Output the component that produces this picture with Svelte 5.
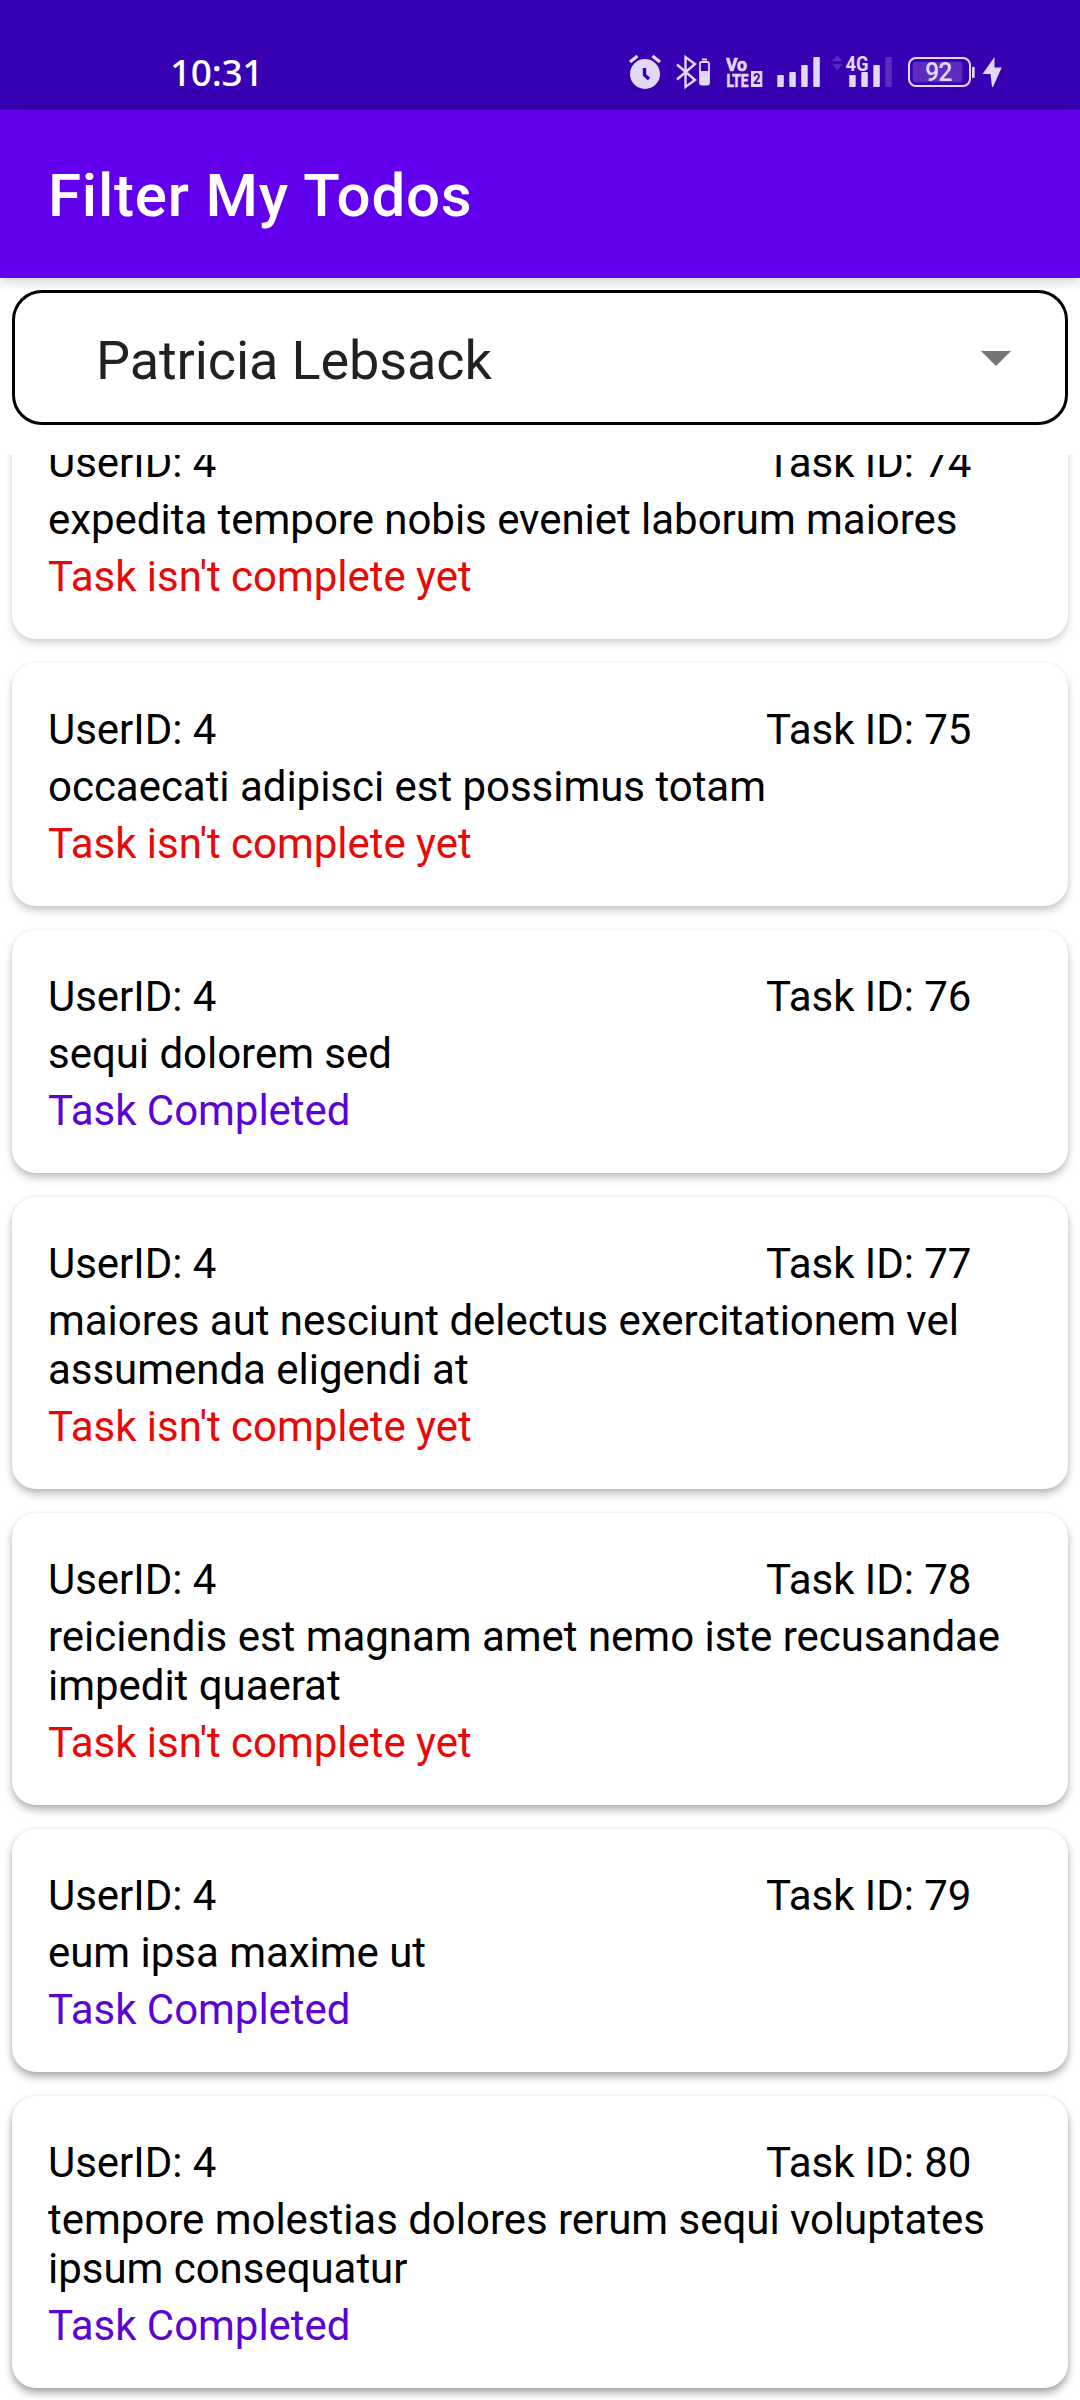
<script>
  const user = 'Patricia Lebsack';

  // `depth` is the shadow strength: cards lower on the screen cast a darker one.
  const todos = [
    { id: 74, title: 'expedita tempore nobis eveniet laborum maiores', done: false, depth: 0.14 },
    { id: 75, title: 'occaecati adipisci est possimus totam', done: false, depth: 0.19 },
    { id: 76, title: 'sequi dolorem sed', done: true, depth: 0.22 },
    { id: 77, title: 'maiores aut nesciunt delectus exercitationem vel assumenda eligendi at', done: false, depth: 0.25 },
    { id: 78, title: 'reiciendis est magnam amet nemo iste recusandae impedit quaerat', done: false, depth: 0.28 },
    { id: 79, title: 'eum ipsa maxime ut', done: true, depth: 0.31 },
    { id: 80, title: 'tempore molestias dolores rerum sequi voluptates ipsum consequatur', done: true, depth: 0.34 }
  ];
</script>

<div class="screen">
  <div class="status">
    <span class="clock">10:31</span>
    <div class="icons">
      <svg class="alarm" width="34" height="40" viewBox="628 52 34 40">
        <circle cx="645" cy="74" r="15" />
        <path class="line" d="M630 62 L637.5 56 M660 62 L652.5 56" stroke-width="3.2" />
        <path class="cut" d="M644.5 68 V75 L649 79" />
      </svg>
      <svg class="bluetooth" width="35" height="40" viewBox="676 52 35 40">
        <path class="line" d="M677 64.500 L695 80 L685.500 87 V57 L695 64 L677 79.500" stroke-width="2.4" />
        <rect x="702" y="58.500" width="5" height="2" />
        <rect class="line" x="700" y="62" width="9" height="22.500" rx="1.500" stroke-width="1.8" />
        <rect x="700" y="71" width="9" height="13.500" />
      </svg>
      <svg class="volte" width="37" height="40" viewBox="726 52 37 40">
        <text class="heavy" x="726" y="70.500" font-size="18.500" textLength="21" lengthAdjust="spacingAndGlyphs">Vo</text>
        <text class="heavy" x="726.500" y="86.500" font-size="19" textLength="22" lengthAdjust="spacingAndGlyphs">LTE</text>
        <rect x="751" y="71" width="11.300" height="16" />
        <text class="dark" x="753" y="84.300" font-size="14.500" textLength="7.500" lengthAdjust="spacingAndGlyphs">2</text>
      </svg>
      <svg class="signal" width="43" height="40" viewBox="777 52 43 40">
        <rect x="777.300" y="75" width="6.500" height="12" rx="1" />
        <rect x="789.300" y="72" width="6.500" height="15" rx="1" />
        <rect x="801.200" y="65" width="6.500" height="22" rx="1" />
        <rect x="813.300" y="57" width="6.500" height="30" rx="1" />
      </svg>
      <svg class="mobile" width="61" height="40" viewBox="832 52 61 40">
        <path class="faint" d="M832 61 L837.200 55.500 L842.500 61 Z M832 64.300 H842.500 L837.200 70 Z" />
        <text x="845.500" y="70.500" font-size="21" textLength="23" lengthAdjust="spacingAndGlyphs">4G</text>
        <rect x="849.200" y="75" width="6.500" height="12" rx="1" />
        <rect x="861.300" y="72" width="6.500" height="15" rx="1" />
        <rect x="873.300" y="65" width="6.500" height="22" rx="1" />
        <rect class="faint" x="885.300" y="57" width="6.500" height="30" rx="1" />
      </svg>
      <svg class="battery" width="67" height="40" viewBox="908 52 67 40">
        <rect class="line" x="909" y="58" width="61" height="28" rx="7" stroke-width="2" />
        <rect class="faint" x="912.700" y="61.700" width="49.600" height="20.600" rx="3" />
        <rect x="972" y="66.700" width="2.700" height="11.300" rx="1" />
        <text class="charge" x="925" y="81.300" font-size="25" textLength="27.500">92</text>
      </svg>
      <svg class="bolt" width="20" height="40" viewBox="982 52 20 40">
        <path d="M994.500 57 L982.500 74 H990.500 L992 87 H993 L1001.700 67.500 H994.500 Z" />
      </svg>
    </div>
  </div>

  <header class="appbar"><h1>Filter My Todos</h1></header>

  <button class="picker">
    <span>{user}</span>
    <svg width="30" height="15" viewBox="0 0 30 15"><path d="M0 0 H30 L15 15 Z" /></svg>
  </button>

  <main class="viewport">
    <div class="list">
      {#each todos as todo (todo.id)}
        <article class="card" style="--depth: {todo.depth}">
          <div class="ids">
            <span>UserID: 4</span>
            <span>Task ID: {todo.id}</span>
          </div>
          <p>{todo.title}</p>
          <p class={todo.done ? 'done' : 'open'}>{todo.done ? 'Task Completed' : "Task isn't complete yet"}</p>
        </article>
      {/each}
    </div>
  </main>
</div>

<style>
  :global(body) {
    margin: 0;
    background: #fff;
  }
  .screen {
    width: 1080px;
    height: 2400px;
    display: flex;
    flex-direction: column;
    overflow: hidden;
    background: #fff;
    font-family: Roboto, sans-serif;
    color: #000;
  }
  .status {
    flex: none;
    box-sizing: border-box;
    height: 110px;
    padding: 52px 78px 18px 170px;
    display: flex;
    justify-content: space-between;
    background: #3700b3;
  }
  .clock {
    color: #fff;
    font: 500 37px/40px 'Noto Sans', sans-serif;
    letter-spacing: -0.3px;
  }
  .icons {
    display: flex;
  }
  .icons svg {
    fill: #e1d8f5;
    font-family: Roboto, sans-serif;
    font-weight: 700;
  }
  .icons .line {
    fill: none;
    stroke: #e1d8f5;
  }
  .icons .cut {
    fill: none;
    stroke: #3700b3;
    stroke-width: 3.4;
  }
  .icons .dark {
    fill: #3700b3;
  }
  .icons .faint {
    fill: #5a2cc1;
  }
  .icons .heavy {
    stroke: #e1d8f5;
    stroke-width: 0.7;
  }
  .icons .charge {
    font-weight: 500;
  }
  .bluetooth { margin-left: 14px; }
  .volte { margin-left: 15px; }
  .signal { margin-left: 14px; }
  .mobile { margin-left: 12px; }
  .battery { margin-left: 15px; }
  .bolt { margin-left: 7px; }

  .appbar {
    flex: none;
    height: 168px;
    padding: 0 48px;
    display: flex;
    align-items: center;
    background: #6200ee;
    box-shadow: 0 3px 12px rgba(0, 0, 0, 0.2);
  }
  h1 {
    margin: 3px 0 0;
    color: #fff;
    font-size: 60px;
    font-weight: 500;
    line-height: 70px;
    letter-spacing: 0.8px;
  }

  .picker {
    flex: none;
    box-sizing: border-box;
    height: 135px;
    margin: 12px 12px 30px;
    padding: 2px 54px 0 81px;
    display: flex;
    align-items: center;
    justify-content: space-between;
    border: 3px solid #000;
    border-radius: 30px;
    background: #fff;
    color: #212121;
    font: 400 54px/64px Roboto, sans-serif;
    letter-spacing: -0.1px;
  }
  .picker span {
    padding-top: 4px;
  }
  .picker svg {
    fill: #757575;
  }

  .viewport {
    flex: 1;
    min-height: 0;
    display: flex;
    flex-direction: column;
    justify-content: flex-end;
    overflow: hidden;
  }
  .list {
    display: flex;
    flex-direction: column;
    gap: 24px;
    padding: 0 12px 12px;
  }
  .card {
    display: flex;
    flex-direction: column;
    gap: 8px;
    padding: 42px 36px 38px;
    border-radius: 24px;
    background: #fff;
    box-shadow:
      0 5px 8px rgba(0, 0, 0, var(--depth)),
      0 1px 4px rgba(0, 0, 0, 0.08);
    font-size: 42px;
    line-height: 49px;
    letter-spacing: -0.03px;
  }
  .ids {
    display: grid;
    grid-template-columns: 718px 1fr;
  }
  p {
    margin: 0;
  }
  .open {
    color: #e80808;
  }
  .done {
    color: #5a04d6;
  }
</style>
